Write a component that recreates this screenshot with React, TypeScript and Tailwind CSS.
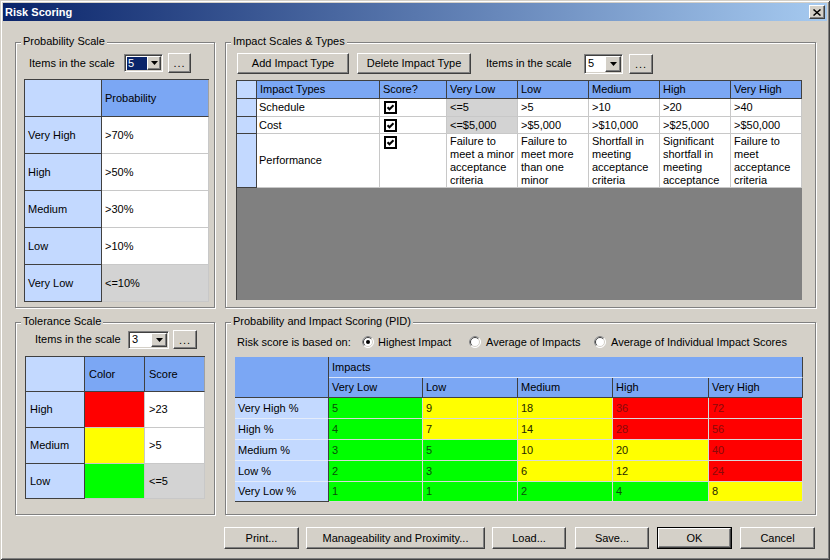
import type { ReactNode } from "react";

const raised =
  "border border-t-white border-l-white border-r-[#404040] border-b-[#404040] shadow-[inset_-1px_-1px_0_#808080]";
const sunken =
  "border border-t-[#808080] border-l-[#808080] border-r-white border-b-white shadow-[inset_1px_1px_0_#404040,inset_-1px_-1px_0_#d4d0c8]";

function Group({ title, className = "", children }: { title: string; className?: string; children?: ReactNode }) {
  return (
    <div className={`relative border border-[#808080] shadow-[inset_1px_1px_0_#fff,1px_1px_0_#fff] ${className}`}>
      <span className="absolute -top-[8px] left-[5px] bg-[#d4d0c8] px-[2px] leading-[13px]">{title}</span>
      {children}
    </div>
  );
}

function Btn({ className = "", children, isDefault = false }: { className?: string; children: ReactNode; isDefault?: boolean }) {
  if (isDefault)
    return (
      <div className={`border border-black ${className}`}>
        <div className={`${raised} flex h-full w-full items-center justify-center`}>{children}</div>
      </div>
    );
  return <div className={`${raised} flex items-center justify-center ${className}`}>{children}</div>;
}

function Arrow() {
  return (
    <svg width="7" height="4" viewBox="0 0 7 4">
      <path d="M0 0h7L3.5 4z" fill="#000" />
    </svg>
  );
}

function Combo({ className = "", value, selected = false }: { className?: string; value: string; selected?: boolean }) {
  return (
    <div className={`${sunken} flex bg-white p-[1px] ${className}`}>
      <div className="flex flex-1 items-center pl-[1px]">
        {selected ? (
          <span className="h-[13px] w-[20px] bg-[#0a246a] pl-[1px] text-white">{value}</span>
        ) : (
          <span className="pl-[1px]">{value}</span>
        )}
      </div>
      <div className={`${raised} flex w-[16px] items-center justify-center bg-[#d4d0c8]`}>
        <Arrow />
      </div>
    </div>
  );
}

function Dots({ className = "" }: { className?: string }) {
  return (
    <Btn className={className}>
      <span className="mt-[1px] tracking-[1px]">...</span>
    </Btn>
  );
}

function Radio({ checked = false }: { checked?: boolean }) {
  return (
    <svg width="12" height="12" viewBox="0 0 12 12" className="shrink-0">
      <circle cx="6" cy="6" r="5.5" fill="#fff" stroke="#ffffff" />
      <path d="M2.1 9.9A5.5 5.5 0 0 1 9.9 2.1" fill="none" stroke="#808080" />
      <path d="M2.8 9.2A4.5 4.5 0 0 1 9.2 2.8" fill="none" stroke="#404040" />
      <path d="M9.2 2.8A4.5 4.5 0 0 1 2.8 9.2" fill="none" stroke="#d4d0c8" />
      {checked && <circle cx="6" cy="6" r="2" fill="#000" />}
    </svg>
  );
}

function Check() {
  return (
    <svg width="13" height="13" viewBox="0 0 13 13">
      <rect x="1" y="1" width="11" height="11" fill="#fff" stroke="#000" strokeWidth="2" />
      <path d="M3.5 6.2 5.5 8.3 9.5 4.2" fill="none" stroke="#000" strokeWidth="2" />
    </svg>
  );
}

const probRows = [
  ["Very High", ">70%"],
  ["High", ">50%"],
  ["Medium", ">30%"],
  ["Low", ">10%"],
  ["Very Low", "<=10%"],
];

const tolRows = [
  ["High", "bg-[#ff0000]", ">23"],
  ["Medium", "bg-[#ffff00]", ">5"],
  ["Low", "bg-[#00ff00]", "<=5"],
];

const impactHeads = ["Impact Types", "Score?", "Very Low", "Low", "Medium", "High", "Very High"];

const perfText = [
  ["Failure to", "meet a minor", "acceptance", "criteria"],
  ["Failure to", "meet more", "than one", "minor"],
  ["Shortfall in", "meeting", "acceptance", "criteria"],
  ["Significant", "shortfall in", "meeting", "acceptance"],
  ["Failure to", "meet", "acceptance", "criteria"],
];

const pidCols = ["Very Low", "Low", "Medium", "High", "Very High"];
const G = "g";
const Y = "y";
const R = "r";
const pidRows: [string, [number, string][]][] = [
  ["Very High %", [[5, G], [9, Y], [18, Y], [36, R], [72, R]]],
  ["High %", [[4, G], [7, Y], [14, Y], [28, R], [56, R]]],
  ["Medium %", [[3, G], [5, G], [10, Y], [20, Y], [40, R]]],
  ["Low %", [[2, G], [3, G], [6, Y], [12, Y], [24, R]]],
  ["Very Low %", [[1, G], [1, G], [2, G], [4, G], [8, Y]]],
];

function pidCell(c: string) {
  if (c === G) return "bg-[#00ff00] text-[#0a4f0a]";
  if (c === Y) return "bg-[#ffff00] text-[#262600]";
  return "bg-[#ff0000] text-[#8a0a0a]";
}

export default function App() {
  return (
    <div className="h-[560px] w-[830px] overflow-hidden bg-[#d4d0c8] p-[3px] font-['Liberation_Sans',Arial,sans-serif] text-[11px] leading-[13px] text-black shadow-[inset_1px_1px_0_#d4d0c8,inset_-1px_-1px_0_#404040,inset_2px_2px_0_#fff,inset_-2px_-2px_0_#808080]">
      {/* title bar */}
      <div className="flex h-[18px] items-center justify-between bg-[linear-gradient(to_right,#0a246a,#a6caf0)] pl-[2px] pr-[2px]">
        <span className="font-bold text-white">Risk Scoring</span>
        <div className={`${raised} flex h-[14px] w-[16px] items-center justify-center bg-[#d4d0c8]`}>
          <svg width="8" height="7" viewBox="0 0 8 7">
            <path d="M0.5 0.5 7.5 6.5M7.5 0.5 0.5 6.5" stroke="#000" strokeWidth="1.5" />
          </svg>
        </div>
      </div>

      <div className="flex pl-[12px] pt-[21px]">
        {/* left column */}
        <div className="flex w-[200px] flex-col gap-[14px]">
          <Group title="Probability Scale" className="h-[266px]">
            <div className="ml-[13px] mt-[10px] flex h-[20px] items-center">
              <span className="w-[95px]">Items in the scale</span>
              <Combo className="h-[18px] w-[39px]" value="5" selected />
              <Dots className="ml-[5px] h-[20px] w-[23px]" />
            </div>
            <div className="ml-[8px] mt-[6px] grid w-[185px] grid-cols-[77px_107px] grid-rows-[37px_repeat(5,37px)] border-l border-t border-[#404040]">
              <div className="border-b border-r border-[#404040] bg-[#c3d9ff]" />
              <div className="flex items-center border-b border-r border-b-[#404040] border-r-[#a0a0a0] bg-[#7ba7f4] pl-[3px]">Probability</div>
              {probRows.map(([label, val], i) => (
                <div key={label} className="contents">
                  <div className="flex items-center border-b border-r border-[#404040] bg-[#c3d9ff] pl-[3px]">{label}</div>
                  <div
                    className={`flex items-center border-b border-r border-[#c8c8c8] pl-[3px] ${
                      i === probRows.length - 1 ? "bg-[#d3d3d3]" : "bg-white"
                    }`}
                  >
                    {val}
                  </div>
                </div>
              ))}
            </div>
          </Group>

          <Group title="Tolerance Scale" className="h-[193px]">
            <div className="ml-[19px] mt-[7px] flex h-[19px] items-center">
              <span className="w-[93px]">Items in the scale</span>
              <Combo className="h-[18px] w-[41px]" value="3" />
              <Dots className="ml-[4px] h-[19px] w-[24px]" />
            </div>
            <div className="ml-[9px] mt-[7px] grid w-[180px] grid-cols-[59px_60px_60px] grid-rows-[35px_36px_36px_35px] border-l border-t border-[#404040]">
              <div className="border-b border-r border-[#404040] bg-[#c3d9ff]" />
              <div className="flex items-center border-b border-r border-[#404040] bg-[#7ba7f4] pl-[4px]">Color</div>
              <div className="flex items-center border-b border-r border-b-[#404040] border-r-[#a0a0a0] bg-[#7ba7f4] pl-[4px]">Score</div>
              {tolRows.map(([label, color, val], i) => (
                <div key={label} className="contents">
                  <div className="flex items-center border-b border-r border-[#404040] bg-[#c3d9ff] pl-[4px]">{label}</div>
                  <div className={`border-b border-r border-[#c8c8c8] ${color}`} />
                  <div
                    className={`flex items-center border-b border-r border-[#c8c8c8] pl-[4px] ${
                      i === tolRows.length - 1 ? "bg-[#d3d3d3]" : "bg-white"
                    }`}
                  >
                    {val}
                  </div>
                </div>
              ))}
            </div>
          </Group>
        </div>

        {/* right column */}
        <div className="ml-[10px] flex w-[591px] flex-col gap-[14px]">
          <Group title="Impact Scales & Types" className="h-[266px]">
            <div className="ml-[11px] mt-[10px] flex h-[21px] items-center">
              <Btn className="h-[21px] w-[112px]">Add Impact Type</Btn>
              <Btn className="ml-[8px] h-[21px] w-[114px]">Delete Impact Type</Btn>
              <span className="ml-[15px] w-[98px]">Items in the scale</span>
              <Combo className="h-[20px] w-[39px]" value="5" />
              <Dots className="ml-[6px] h-[20px] w-[24px]" />
            </div>
            <div className="ml-[10px] mt-[6px] flex h-[220px] w-[566px] flex-col border-l border-t border-[#404040] bg-[#808080]">
              <div className="grid grid-cols-[20px_123px_67px_71px_71px_71px_71px_71px] grid-rows-[18px_18px_17px_54px]">
                <div className="border-b border-r border-[#404040] bg-[#c3d9ff]" />
                {impactHeads.map((h) => (
                  <div key={h} className="flex items-center border-b border-r border-[#404040] bg-[#7ba7f4] pl-[3px]">
                    {h}
                  </div>
                ))}

                {/* Schedule */}
                <div className="border-b border-r border-[#404040] bg-[#c3d9ff]" />
                <div className="flex items-center border-b border-r border-[#c8c8c8] bg-white pl-[2px]">Schedule</div>
                <div className="flex items-center border-b border-r border-[#c8c8c8] bg-white pl-[4px]">
                  <Check />
                </div>
                {["<=5", ">5", ">10", ">20", ">40"].map((v, i) => (
                  <div
                    key={v}
                    className={`flex items-center border-b border-r border-[#c8c8c8] pl-[3px] ${i === 0 ? "bg-[#d3d3d3]" : "bg-white"}`}
                  >
                    {v}
                  </div>
                ))}

                {/* Cost */}
                <div className="border-b border-r border-[#404040] bg-[#c3d9ff]" />
                <div className="flex items-center border-b border-r border-[#c8c8c8] bg-white pl-[2px]">Cost</div>
                <div className="flex items-center border-b border-r border-[#c8c8c8] bg-white pl-[4px]">
                  <Check />
                </div>
                {["<=$5,000", ">$5,000", ">$10,000", ">$25,000", ">$50,000"].map((v, i) => (
                  <div
                    key={v}
                    className={`flex items-center border-b border-r border-[#c8c8c8] pl-[3px] ${i === 0 ? "bg-[#d3d3d3]" : "bg-white"}`}
                  >
                    {v}
                  </div>
                ))}

                {/* Performance */}
                <div className="border-b border-r border-[#404040] bg-[#c3d9ff]" />
                <div className="flex items-center border-b border-r border-[#c8c8c8] bg-white pl-[2px]">Performance</div>
                <div className="border-b border-r border-[#c8c8c8] bg-white pl-[4px] pt-[2px]">
                  <Check />
                </div>
                {perfText.map((lines, i) => (
                  <div key={i} className="overflow-hidden border-b border-r border-[#c8c8c8] bg-white pl-[3px] pt-[1px]">
                    {lines.map((l, j) => (
                      <div key={j} className="whitespace-nowrap">
                        {l}
                      </div>
                    ))}
                  </div>
                ))}
              </div>
            </div>
          </Group>

          <Group title="Probability and Impact Scoring (PID)" className="h-[193px]">
            <div className="ml-[11px] mt-[11px] flex h-[16px] items-center">
              <span className="w-[125px]">Risk score is based on:</span>
              <label className="flex w-[107px] items-center">
                <Radio checked />
                <span className="ml-[4px]">Highest Impact</span>
              </label>
              <label className="flex w-[125px] items-center">
                <Radio />
                <span className="ml-[5px]">Average of Impacts</span>
              </label>
              <label className="flex items-center">
                <Radio />
                <span className="ml-[5px]">Average of Individual Impact Scores</span>
              </label>
            </div>
            <div className="ml-[9px] mt-[7px] grid w-[568px] grid-cols-[94px_94px_95px_95px_96px_94px] grid-rows-[21px_20px_21px_21px_21px_21px_20px]">
              <div className="row-span-2 border-b border-r border-[#404040] bg-[#7ba7f4]" />
              <div className="col-span-5 flex items-center border-b border-r border-b-[#dbe6fb] border-r-[#404040] bg-[#7ba7f4] pl-[3px]">
                Impacts
              </div>
              {pidCols.map((c) => (
                <div key={c} className="flex items-center border-b border-r border-[#404040] bg-[#7ba7f4] pl-[3px]">
                  {c}
                </div>
              ))}
              {pidRows.map(([label, cells], i) => (
                <div key={label} className="contents">
                  <div
                    className={`flex items-center border-b border-r border-r-[#404040] bg-[#c3d9ff] pl-[3px] ${
                      i === pidRows.length - 1 ? "border-b-[#404040]" : "border-b-[#e4ecfa]"
                    }`}
                  >
                    {label}
                  </div>
                  {cells.map(([v, c], j) => (
                    <div key={j} className={`flex items-center border-b border-r border-[#d8d8d8] pl-[3px] ${pidCell(c)}`}>
                      {v}
                    </div>
                  ))}
                </div>
              ))}
            </div>
          </Group>
        </div>
      </div>

      {/* bottom buttons */}
      <div className="ml-[221px] mt-[12px] flex h-[22px]">
        <Btn className="w-[75px]">Print...</Btn>
        <Btn className="ml-[7px] w-[179px]">Manageability and Proximity...</Btn>
        <Btn className="ml-[7px] w-[74px]">Load...</Btn>
        <Btn className="ml-[9px] w-[74px]">Save...</Btn>
        <Btn className="ml-[8px] w-[75px]" isDefault>
          OK
        </Btn>
        <Btn className="ml-[8px] w-[75px]">Cancel</Btn>
      </div>
    </div>
  );
}
